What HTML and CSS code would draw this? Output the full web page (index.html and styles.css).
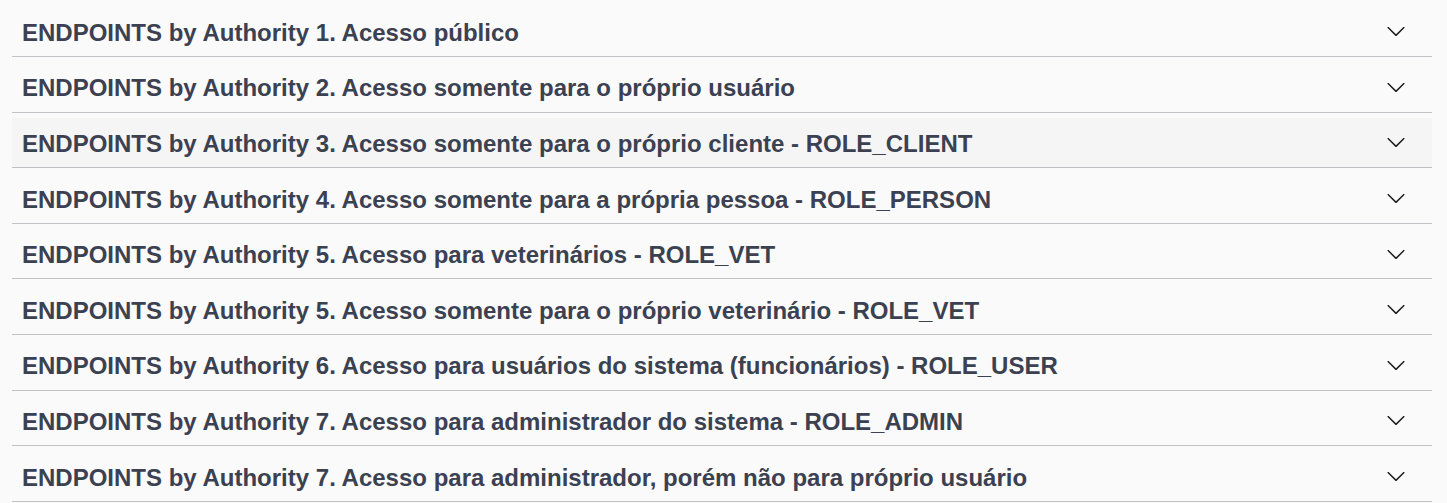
FILE: index.html
```html
<!DOCTYPE html>
<html lang="pt">
<head>
<meta charset="utf-8">
<title>Swagger tags</title>
<link rel="stylesheet" href="styles.css">
</head>
<body>
<div class="wrapper">
  <section class="tag-section"><h3 class="tag"><span class="tag-name">ENDPOINTS by Authority 1. Acesso público</span><button class="expand"><svg class="arrow" width="20" height="20" viewBox="0 0 20 20"><path d="M17.418 6.109c.272-.268.709-.268.979 0s.271.701 0 .969l-7.908 7.83c-.27.268-.707.268-.979 0l-7.908-7.830c-.27-.268-.27-.701 0-.969.271-.268.709-.268.979 0L10 13.25l7.418-7.141z"/></svg></button></h3></section>
  <section class="tag-section"><h3 class="tag"><span class="tag-name">ENDPOINTS by Authority 2. Acesso somente para o próprio usuário</span><button class="expand"><svg class="arrow" width="20" height="20" viewBox="0 0 20 20"><path d="M17.418 6.109c.272-.268.709-.268.979 0s.271.701 0 .969l-7.908 7.83c-.27.268-.707.268-.979 0l-7.908-7.830c-.27-.268-.27-.701 0-.969.271-.268.709-.268.979 0L10 13.25l7.418-7.141z"/></svg></button></h3></section>
  <section class="tag-section"><h3 class="tag tag-hover"><span class="tag-name">ENDPOINTS by Authority 3. Acesso somente para o próprio cliente - ROLE_CLIENT</span><button class="expand"><svg class="arrow" width="20" height="20" viewBox="0 0 20 20"><path d="M17.418 6.109c.272-.268.709-.268.979 0s.271.701 0 .969l-7.908 7.83c-.27.268-.707.268-.979 0l-7.908-7.830c-.27-.268-.27-.701 0-.969.271-.268.709-.268.979 0L10 13.25l7.418-7.141z"/></svg></button></h3></section>
  <section class="tag-section"><h3 class="tag"><span class="tag-name">ENDPOINTS by Authority 4. Acesso somente para a própria pessoa - ROLE_PERSON</span><button class="expand"><svg class="arrow" width="20" height="20" viewBox="0 0 20 20"><path d="M17.418 6.109c.272-.268.709-.268.979 0s.271.701 0 .969l-7.908 7.83c-.27.268-.707.268-.979 0l-7.908-7.830c-.27-.268-.27-.701 0-.969.271-.268.709-.268.979 0L10 13.25l7.418-7.141z"/></svg></button></h3></section>
  <section class="tag-section"><h3 class="tag"><span class="tag-name">ENDPOINTS by Authority 5. Acesso para veterinários - ROLE_VET</span><button class="expand"><svg class="arrow" width="20" height="20" viewBox="0 0 20 20"><path d="M17.418 6.109c.272-.268.709-.268.979 0s.271.701 0 .969l-7.908 7.83c-.27.268-.707.268-.979 0l-7.908-7.830c-.27-.268-.27-.701 0-.969.271-.268.709-.268.979 0L10 13.25l7.418-7.141z"/></svg></button></h3></section>
  <section class="tag-section"><h3 class="tag"><span class="tag-name">ENDPOINTS by Authority 5. Acesso somente para o próprio veterinário - ROLE_VET</span><button class="expand"><svg class="arrow" width="20" height="20" viewBox="0 0 20 20"><path d="M17.418 6.109c.272-.268.709-.268.979 0s.271.701 0 .969l-7.908 7.83c-.27.268-.707.268-.979 0l-7.908-7.830c-.27-.268-.27-.701 0-.969.271-.268.709-.268.979 0L10 13.25l7.418-7.141z"/></svg></button></h3></section>
  <section class="tag-section"><h3 class="tag"><span class="tag-name">ENDPOINTS by Authority 6. Acesso para usuários do sistema (funcionários) - ROLE_USER</span><button class="expand"><svg class="arrow" width="20" height="20" viewBox="0 0 20 20"><path d="M17.418 6.109c.272-.268.709-.268.979 0s.271.701 0 .969l-7.908 7.83c-.27.268-.707.268-.979 0l-7.908-7.830c-.27-.268-.27-.701 0-.969.271-.268.709-.268.979 0L10 13.25l7.418-7.141z"/></svg></button></h3></section>
  <section class="tag-section"><h3 class="tag"><span class="tag-name">ENDPOINTS by Authority 7. Acesso para administrador do sistema - ROLE_ADMIN</span><button class="expand"><svg class="arrow" width="20" height="20" viewBox="0 0 20 20"><path d="M17.418 6.109c.272-.268.709-.268.979 0s.271.701 0 .969l-7.908 7.83c-.27.268-.707.268-.979 0l-7.908-7.830c-.27-.268-.27-.701 0-.969.271-.268.709-.268.979 0L10 13.25l7.418-7.141z"/></svg></button></h3></section>
  <section class="tag-section"><h3 class="tag"><span class="tag-name">ENDPOINTS by Authority 7. Acesso para administrador, porém não para próprio usuário</span><button class="expand"><svg class="arrow" width="20" height="20" viewBox="0 0 20 20"><path d="M17.418 6.109c.272-.268.709-.268.979 0s.271.701 0 .969l-7.908 7.83c-.27.268-.707.268-.979 0l-7.908-7.830c-.27-.268-.27-.701 0-.969.271-.268.709-.268.979 0L10 13.25l7.418-7.141z"/></svg></button></h3></section>
</div>
</body>
</html>
```

FILE: styles.css
```css
html, body {
  margin: 0;
  padding: 0;
  background: #fafafa;
}

.wrapper {
  margin: 0 15px 0 12px;
  padding-top: 6.4px;
  font-family: "Liberation Sans", Arial, sans-serif;
}

.tag-section {
  display: block;
}

.tag {
  display: flex;
  align-items: center;
  margin: 0 0 5px;
  padding: 10px 20px 10px 10px;
  height: 29.6px;
  font-size: 24px;
  font-weight: 700;
  color: #3b4151;
  border-bottom: 1px solid rgba(59, 65, 81, 0.3);
  cursor: pointer;
}

.tag-hover {
  background: rgba(0, 0, 0, 0.02);
}

.tag-name {
  flex: 1;
  line-height: 29.6px;
  padding-top: 3px;
  white-space: nowrap;
}

.expand {
  display: flex;
  align-items: center;
  padding: 1px 6px;
  border: none;
  background: none;
  cursor: pointer;
}

.arrow {
  display: block;
  fill: #1b1b1b;
}
```
